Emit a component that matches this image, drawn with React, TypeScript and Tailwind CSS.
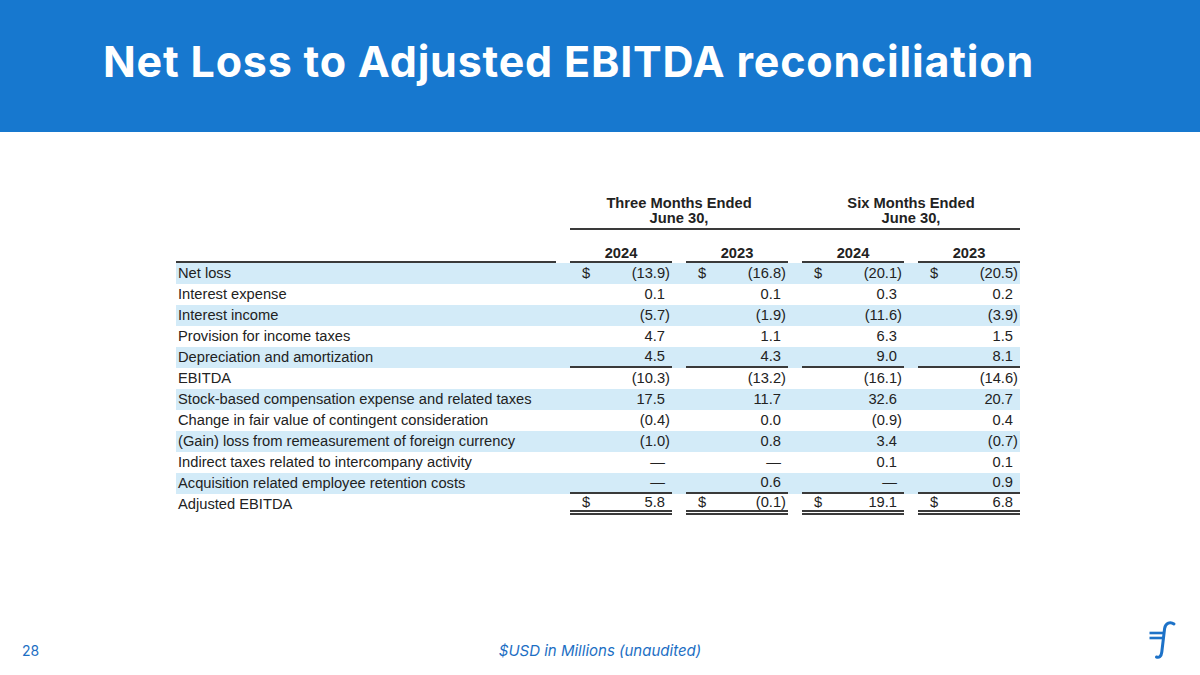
type Row = {
  label: string;
  values: string[];
  dollar?: boolean;
  rule?: "single" | "double";
};

const rows: Row[] = [
  { label: "Net loss", values: ["(13.9)", "(16.8)", "(20.1)", "(20.5)"], dollar: true },
  { label: "Interest expense", values: ["0.1", "0.1", "0.3", "0.2"] },
  { label: "Interest income", values: ["(5.7)", "(1.9)", "(11.6)", "(3.9)"] },
  { label: "Provision for income taxes", values: ["4.7", "1.1", "6.3", "1.5"] },
  { label: "Depreciation and amortization", values: ["4.5", "4.3", "9.0", "8.1"], rule: "single" },
  { label: "EBITDA", values: ["(10.3)", "(13.2)", "(16.1)", "(14.6)"] },
  { label: "Stock-based compensation expense and related taxes", values: ["17.5", "11.7", "32.6", "20.7"] },
  { label: "Change in fair value of contingent consideration", values: ["(0.4)", "0.0", "(0.9)", "0.4"] },
  { label: "(Gain) loss from remeasurement of foreign currency", values: ["(1.0)", "0.8", "3.4", "(0.7)"] },
  { label: "Indirect taxes related to intercompany activity", values: ["—", "—", "0.1", "0.1"] },
  { label: "Acquisition related employee retention costs", values: ["—", "0.6", "—", "0.9"], rule: "single" },
  { label: "Adjusted EBITDA", values: ["5.8", "(0.1)", "19.1", "6.8"], dollar: true, rule: "double" },
];

const grid = "grid grid-cols-[380px_102px_102px_102px_102px] gap-x-[14px]";

const ValueCell = ({ row, value }: { row: Row; value: string }) => {
  const paren = value.endsWith(")");
  const ruleClass =
    row.rule === "single"
      ? "border-b-2 border-[#3a3a3a]"
      : row.rule === "double"
        ? "border-b-[5px] border-double border-[#3a3a3a]"
        : "";
  return (
    <div className={`flex h-[21px] items-center justify-between pl-[12px] ${ruleClass}`}>
      <span>{row.dollar ? "$" : ""}</span>
      <span className={paren ? "pr-[2px]" : "pr-[7px]"}>{value}</span>
    </div>
  );
};

const Logo = () => (
  <svg width="30" height="40" viewBox="0 0 30 40" fill="none">
    <path
      d="M26 4 C22.5 1.5 17.5 2.5 16.6 8.5 L13.8 32 C13.3 36.5 11 38 8.5 37"
      stroke="#1d72c8"
      strokeWidth="3"
      strokeLinecap="round"
    />
    <path d="M1.5 13 H17" stroke="#1d72c8" strokeWidth="2.6" />
    <path d="M1.5 18 H15.5" stroke="#1d72c8" strokeWidth="2.6" />
  </svg>
);

export default function App() {
  return (
    <div className="flex h-[675px] w-[1200px] flex-col bg-white">
      <header className="h-[132px] shrink-0 bg-[#1778cf] pl-[103px] pt-[40px]">
        <h1 className="font-['Inter',sans-serif] text-[43px] font-bold leading-[43px] tracking-[0.8px] text-white">
          Net Loss to Adjusted EBITDA reconciliation
        </h1>
      </header>

      <main className="flex-1 pl-[176px] pt-[64px] font-['Liberation_Sans',Arial,sans-serif] text-[14.7px] text-[#222]">
        <div className={grid}>
          <div />
          <div className="col-span-4 grid grid-cols-2 gap-x-[14px] border-b-2 border-[#3a3a3a] pb-[2px] text-center font-bold leading-[15px]">
            <div>
              Three Months Ended
              <br />
              June 30,
            </div>
            <div>
              Six Months Ended
              <br />
              June 30,
            </div>
          </div>
        </div>

        <div className={grid}>
          <div className="h-[33px] border-b-2 border-[#3a3a3a]" />
          {["2024", "2023", "2024", "2023"].map((y, i) => (
            <div
              key={i}
              className="flex h-[33px] items-end justify-center border-b-2 border-[#3a3a3a] font-bold leading-[15px]"
            >
              {y}
            </div>
          ))}
        </div>

        <div className="w-[844px]">
          {rows.map((row, i) => (
            <div key={row.label} className={`${grid} ${i % 2 === 0 ? "bg-[#d3ebf8]" : ""}`}>
              <div className="flex h-[21px] items-center pl-[2px]">{row.label}</div>
              {row.values.map((v, j) => (
                <ValueCell key={j} row={row} value={v} />
              ))}
            </div>
          ))}
        </div>
      </main>

      <footer className="grid h-[60px] shrink-0 grid-cols-[1fr_auto_1fr] font-['Inter',sans-serif] text-[15px] leading-[16px] text-[#1d6fc4]">
        <div className="pl-[22px] pt-[28px] text-[14px]">28</div>
        <div className="pt-[28px] italic">$USD in Millions (unaudited)</div>
        <div className="flex justify-end pr-[22px] pt-[5px]">
          <Logo />
        </div>
      </footer>
    </div>
  );
}
